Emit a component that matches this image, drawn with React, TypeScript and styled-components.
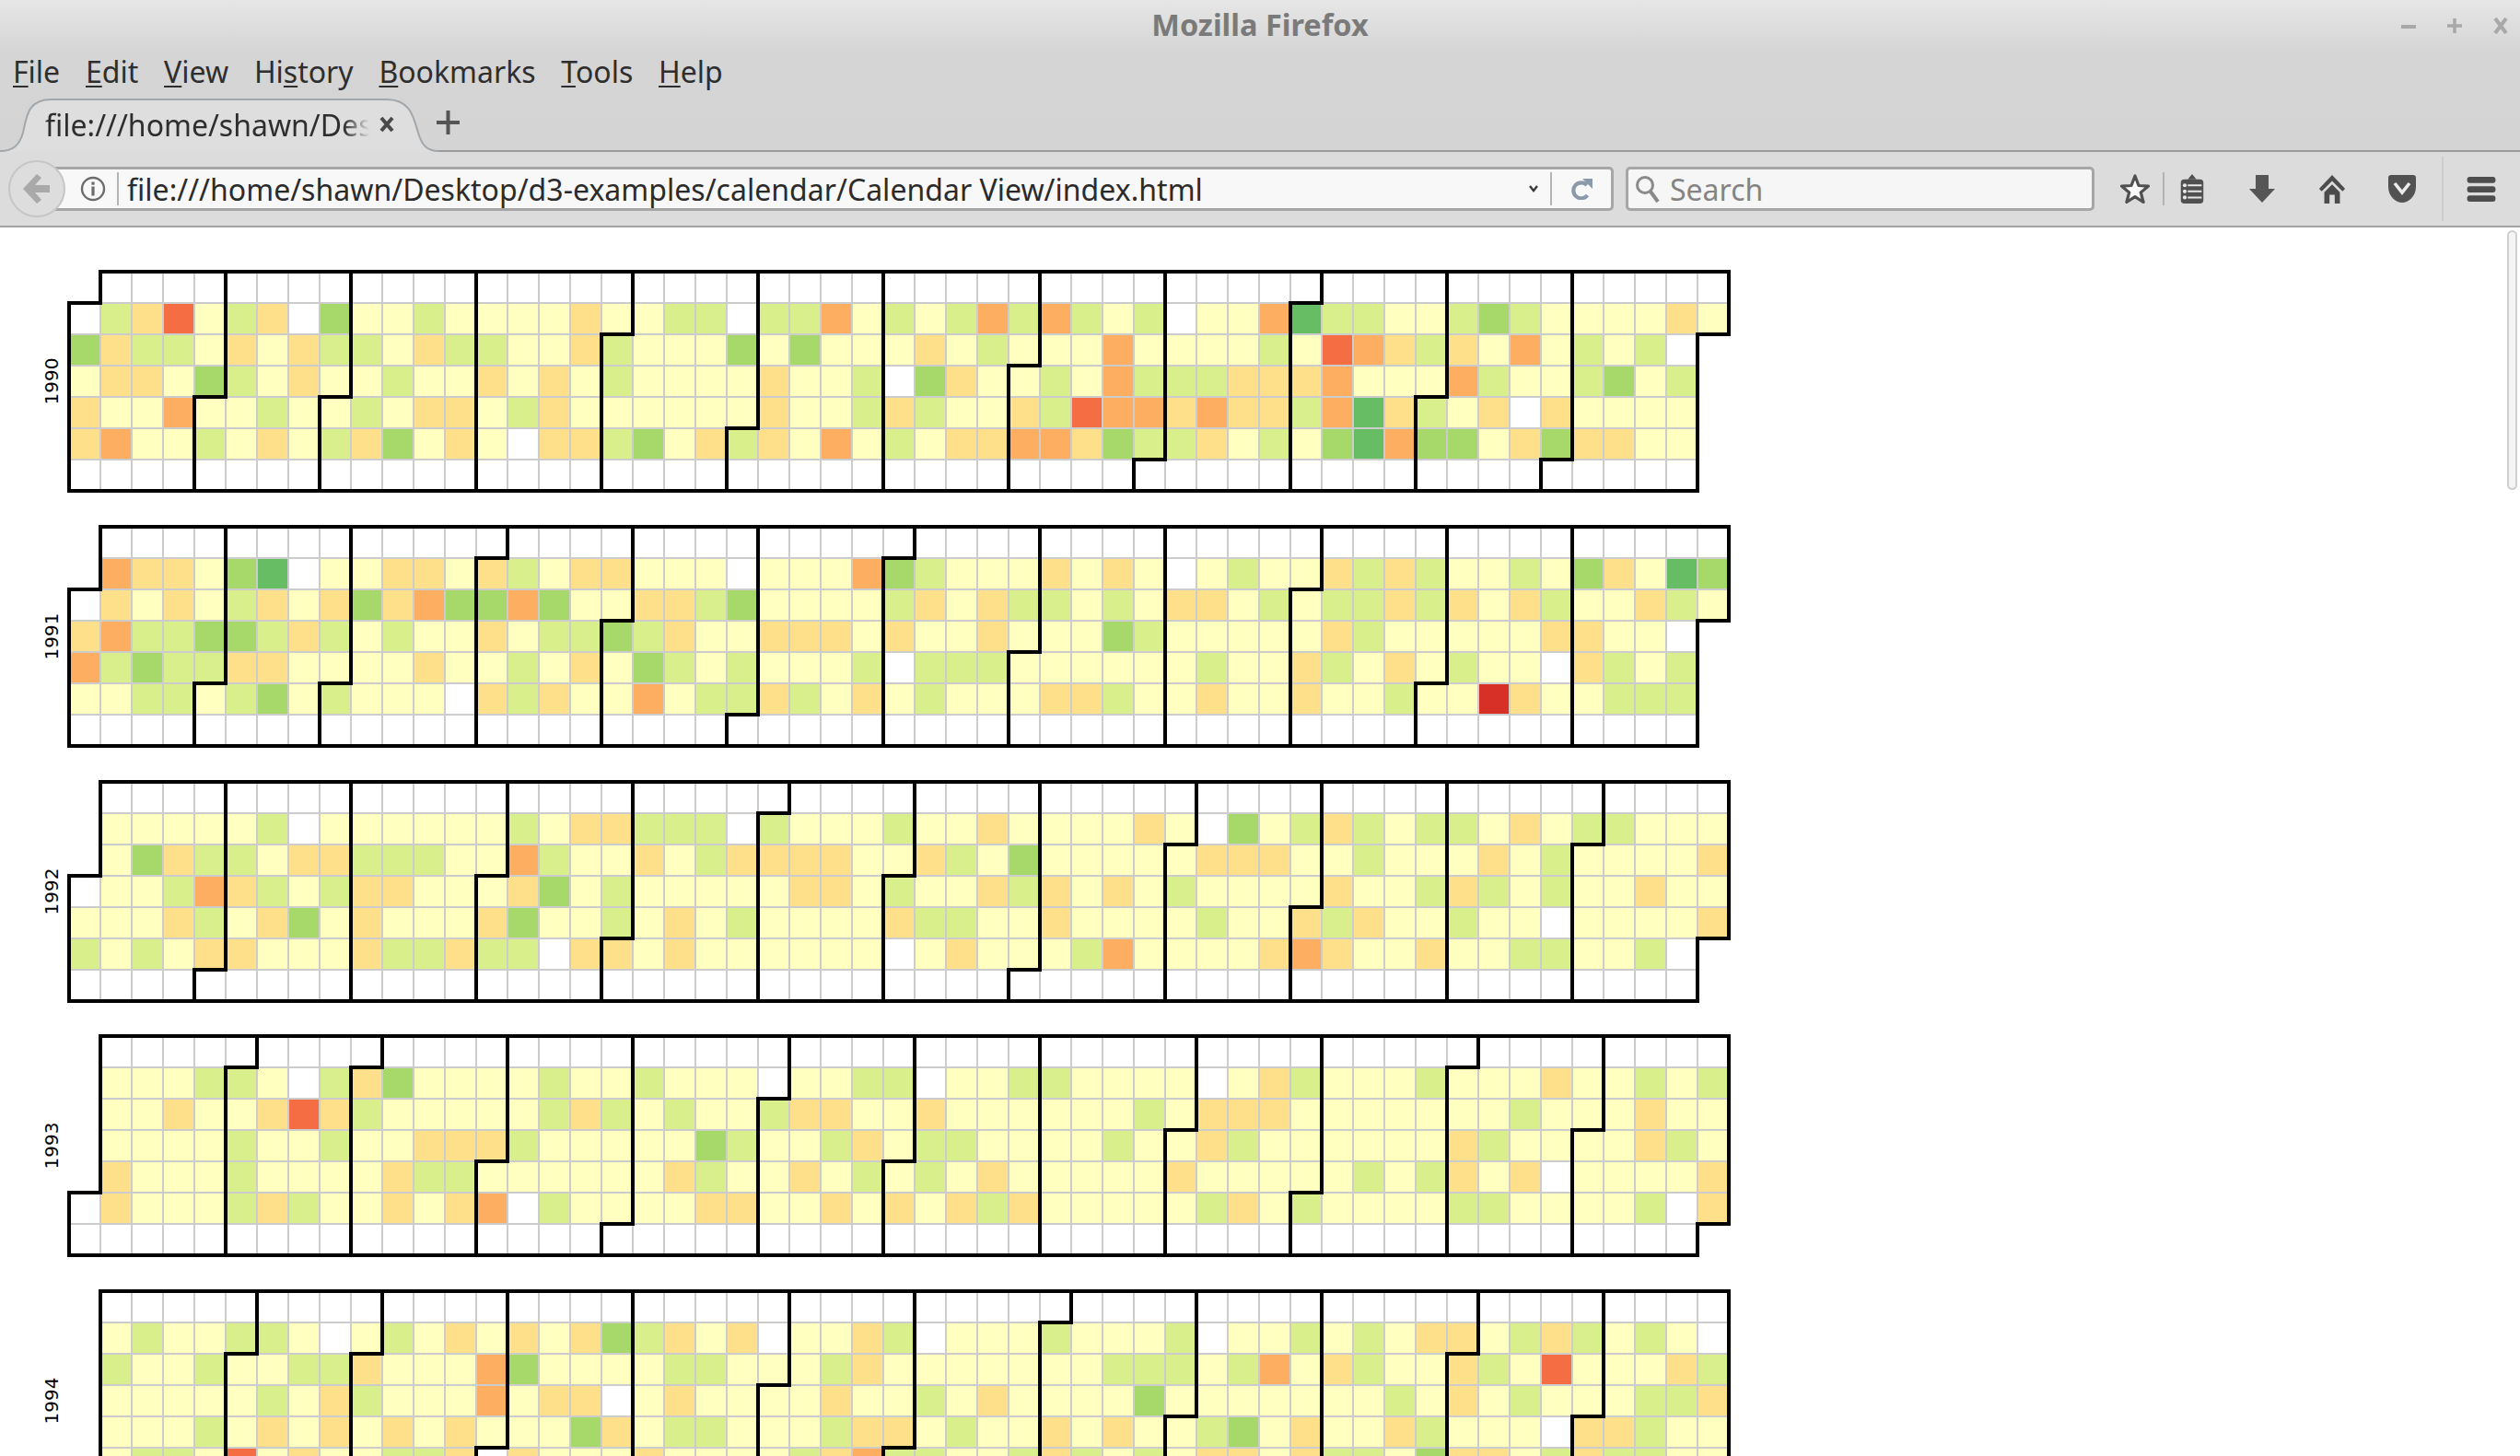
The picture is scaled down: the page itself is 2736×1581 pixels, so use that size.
import React from 'react'
import styled, { createGlobalStyle } from 'styled-components'

const GlobalStyle = createGlobalStyle`
  html, body {
    margin: 0;
    padding: 0;
    background: #fff;
  }
`

const uiFont = `'Noto Sans', 'Open Sans', sans-serif`

const Window = styled.div`
  width: 2736px;
  height: 1581px;
  display: flex;
  flex-direction: column;
  overflow: hidden;
  font-family: ${uiFont};
`

const TopChrome = styled.div`
  background: linear-gradient(to bottom, #e6e6e6 0, #d5d5d5 56px, #d4d4d4 100%);
`

const TitleBar = styled.div`
  height: 56px;
  display: grid;
  grid-template-columns: 1fr auto 1fr;
  align-items: center;
`

const Title = styled.div`
  grid-column: 2;
  font-size: 32.5px;
  font-weight: 700;
  color: #7a7a7a;
  margin-top: -3px;
`

const WindowButtons = styled.div`
  grid-column: 3;
  justify-self: end;
  display: flex;
  gap: 32px;
  padding-right: 12px;
  color: #a8a8a8;
`

const MenuBar = styled.div`
  height: 44px;
  display: flex;
  align-items: center;
  padding-left: 14px;
  gap: 27.8px;
`

const MenuItem = styled.span`
  font-size: 32px;
  line-height: 44px;
  color: #2e2e2e;

  u {
    text-underline-offset: 3px;
    text-decoration-thickness: 2px;
  }
`

const TabStrip = styled.div`
  height: 65px;
  display: flex;
  align-items: center;
  box-shadow: inset 0 -2px 0 #9c9c9c;
`

const Tab = styled.div`
  position: relative;
  width: 476px;
  height: 65px;
  display: flex;
  align-items: center;
  padding: 9px 0 0 49px;
  box-sizing: border-box;
  flex-shrink: 0;
`

const TabShape = styled.svg`
  position: absolute;
  left: 0;
  top: 0;
`

const TabLabel = styled.div`
  position: relative;
  width: 352px;
  overflow: hidden;
  white-space: nowrap;
  font-size: 32px;
  color: #2e2e2e;
  margin-top: -3px;
  -webkit-mask-image: linear-gradient(to right, #000 92%, transparent 100%);
  mask-image: linear-gradient(to right, #000 92%, transparent 100%);
`

const TabClose = styled.svg`
  position: relative;
  margin: -5px 0 0 11px;
`

const NewTab = styled.svg`
  margin: 1px 0 0 -2px;
`

const NavBar = styled.div`
  position: relative;
  height: 80px;
  display: flex;
  align-items: center;
  background: #dcdcdc;
  border-bottom: 2px solid #a3a3a3;
  padding-left: 60px;
`

const BackButton = styled.div`
  position: absolute;
  left: 9px;
  top: 9px;
  width: 62px;
  height: 62px;
  box-sizing: border-box;
  border-radius: 50%;
  border: 2px solid #c6c6c6;
  background: #dddddd;
  display: flex;
  align-items: center;
  justify-content: center;
`

const UrlBar = styled.div`
  width: 1692px;
  height: 48px;
  box-sizing: border-box;
  display: flex;
  align-items: center;
  background: #f8f8f8;
  border: 3px solid #a6a6a6;
  border-left: 0;
  border-radius: 0 5px 5px 0;
  padding-left: 27px;
`

const InfoIcon = styled.svg`
  flex-shrink: 0;
`

const UrlDivider = styled.div<{ $margin: string }>`
  width: 2px;
  height: 36px;
  background: #b4b4b4;
  flex-shrink: 0;
  margin: ${({ $margin }) => $margin};
`

const UrlText = styled.div`
  flex: 1;
  font-size: 32px;
  letter-spacing: 0.02px;
  color: #2b2b2b;
  white-space: nowrap;
  line-height: 42px;
  margin-top: 1px;
`

const ReloadIcon = styled.svg`
  margin-right: 19px;
  flex-shrink: 0;
`

const SearchBox = styled.div`
  width: 509px;
  height: 48px;
  margin-left: 13px;
  box-sizing: border-box;
  display: flex;
  align-items: center;
  gap: 10px;
  background: #f6f6f6;
  border: 3px solid #a6a6a6;
  border-radius: 5px;
  padding-left: 7px;
  font-size: 32px;
  color: #848484;
`

const ToolIcons = styled.div`
  display: flex;
  align-items: center;
  margin-left: 28px;
  color: #555;
`

const ToolIcon = styled.svg<{ $gap?: number }>`
  display: block;
  margin-left: ${({ $gap = 0 }) => $gap}px;
`

const ToolDivider = styled.div<{ $tall?: boolean }>`
  width: 2px;
  height: ${({ $tall }) => ($tall ? 70 : 36)}px;
  background: ${({ $tall }) => ($tall ? '#cdcdcd' : '#b4b4b4')};
  margin: ${({ $tall }) => ($tall ? '0 25px 0 27px' : '0 15px 0 14px')};
`

const Page = styled.main`
  position: relative;
  flex: 1;
  padding: 16px 16px 0;
  background: #fff;
  overflow: hidden;
  display: flex;
  flex-direction: column;
  gap: 4.8px;
`

const Scrollbar = styled.div`
  position: absolute;
  right: 3px;
  top: 3px;
  width: 11px;
  height: 282px;
  box-sizing: border-box;
  border: 2px solid #cfcfcf;
  border-radius: 6px;
  background: #f4f4f4;
`

const YearChart = styled.svg`
  display: block;
  flex-shrink: 0;
`

const YearLabel = styled.text`
  font-family: 'DejaVu Sans', sans-serif;
  font-size: 20px;
  fill: #000;
`

const CELL = 34

const palette: Record<string, string> = {
  R: '#d73027',
  r: '#f46d43',
  O: '#fdae61',
  o: '#fee08b',
  y: '#ffffbf',
  g: '#d9ef8b',
  G: '#a6d96a',
  D: '#66bd63',
}

// one string per weekday (Mon..Fri), one letter per week column
const years: Record<number, string[]> = {
  1990: [
    'WgorygoWGy' + 'ygyyyyoyyg' + 'gWggOygygO' + 'gOgygWyyOD' + 'ggyygGgyyy' + 'yoy',
    'Goggyoyogg' + 'yoggyyogyy' + 'yGyGyyyoyg' + 'yyyOyyyygy' + 'rOogoyOygy' + 'gW.',
    'yooyGgyoyy' + 'gyyoyoygyy' + 'yyoyygWGoy' + 'ygyOgggooo' + 'OyyyOgyygG' + 'yg.',
    'oyyOyygyyg' + 'yooygoyyyy' + 'yyoyygogyy' + 'ogrOOoOoog' + 'ODogyoWoyy' + 'yy.',
    'oOyygyoygo' + 'GyoyWoogGy' + 'ogoyOygyoo' + 'OOoGggoygy' + 'GDOGGyoGoo' + 'yy.',
  ],
  1991: [
    '.OooyGDWyy' + 'ooyogyooyy' + 'yWyyyOGgyy' + 'yoyoyWygyy' + 'ogogyygyGo' + 'yDG',
    'WoyoygoyoG' + 'oOGGOGyyoo' + 'gGyyyygoyo' + 'ggygyooygy' + 'ggogoyogyy' + 'ogy',
    'oOggGGgogy' + 'gyyoyggGgo' + 'yyoooyoyyo' + 'yyyGgyyyyy' + 'ogyyyyyooy' + 'yW.',
    'OgGggooyyy' + 'yoyygyoyGg' + 'ygyyygWggg' + 'yyyyyygyyo' + 'gyoygyyWog' + 'yg.',
    'yyggygGygy' + 'yyWogoyyOy' + 'ggogyoygyy' + 'yoogyyoyyo' + 'yygyyRoyyg' + 'gg.',
  ],
  1992: [
    '.yyyyygWyy' + 'yyyygyoogg' + 'gWgyyygyyo' + 'yyyyoyWGyg' + 'ogyggyoygg' + 'yyy',
    '.yGoggyoog' + 'ggyyOgyyoy' + 'gooooyyogy' + 'Gyyyyyoooy' + 'ygyyyoygyy' + 'yyo',
    'WyygOogygo' + 'oyyyoGygyy' + 'yyyooygyyo' + 'goyoygyyyy' + 'oyygogygyy' + 'oyy',
    'yyyogyoGyo' + 'yyyoGyygyo' + 'ygyyyyoggy' + 'yoyyyygyyo' + 'goyygyyWyy' + 'yyo',
    'gygyooyyyo' + 'ggoggWooyo' + 'yyyyyyWyoy' + 'yygOyyyyoO' + 'oyyoyyggyy' + 'gW.',
  ],
  1993: [
    '.yyyggyWgo' + 'Gyyyygyygy' + 'yyWyyggWyy' + 'ggyyyyWyog' + 'yyygyyyoyy' + 'gyg',
    '.yyoyyorog' + 'yyyyygogyg' + 'yygooyyoyy' + 'yyyygyoooy' + 'yyyyyygyyy' + 'oyy',
    '.yyyygyygy' + 'yooogyyyyy' + 'Ggyygoyggy' + 'yyygyyogyy' + 'yyyyogyyyy' + 'ogy',
    '.oyyygyyyy' + 'oggyyyyyyo' + 'gyyoygygyo' + 'yyyyyoyyyy' + 'ygygoyoWyy' + 'yyo',
    'Woyyygogyy' + 'oyoOWgyyyy' + 'ooyyoyoyog' + 'oyyyyygoyg' + 'yyyyggyyyy' + 'gWo',
  ],
  1994: [
    '.ygyyggyWy' + 'gyoyoyoGgo' + 'yoWyyogWyy' + 'ygyyygWyyg' + 'ygyooygogy' + 'gyW',
    '.gyygyyggo' + 'yyyOGyyyyg' + 'gyyygoyyyy' + 'yyygggygOy' + 'ogyyogyryy' + 'yog',
    '.yyyyygyog' + 'yyyOyooWyo' + 'yyyyoyygyo' + 'yyyyGyyyyy' + 'yygyoygyyy' + 'ggo',
    '.yyygyoyoy' + 'oyoyyyGoyg' + 'gyyygooygy' + 'yoyoyygGyo' + 'yyogyyyWoo' + 'gyy',
    '.yggyryoyy' + 'ggoWoyyyoy' + 'yyygoOggyy' + 'gogygyooyo' + 'ggyGooygog' + 'gyy',
  ],
}

const weekOf = (date: Date) => {
  const jan1 = new Date(Date.UTC(date.getUTCFullYear(), 0, 1))
  const dayOfYear = Math.round((date.getTime() - jan1.getTime()) / 86400000)
  return Math.floor((dayOfYear + jan1.getUTCDay()) / 7)
}

const monthPath = (year: number, month: number) => {
  const t0 = new Date(Date.UTC(year, month, 1))
  const t1 = new Date(Date.UTC(year, month + 1, 0))
  const d0 = t0.getUTCDay()
  const w0 = weekOf(t0)
  const d1 = t1.getUTCDay()
  const w1 = weekOf(t1)
  return (
    `M${(w0 + 1) * CELL},${d0 * CELL}H${w0 * CELL}V${7 * CELL}` +
    `H${w1 * CELL}V${(d1 + 1) * CELL}H${(w1 + 1) * CELL}V0H${(w0 + 1) * CELL}Z`
  )
}

const Year = ({ year }: { year: number }) => {
  const days: Date[] = []
  for (let d = new Date(Date.UTC(year, 0, 1)); d.getUTCFullYear() === year; d = new Date(d.getTime() + 86400000)) {
    days.push(d)
  }
  const rows = years[year]
  return (
    <YearChart width={1920} height={272}>
      <g transform="translate(59,32)">
        <YearLabel transform={`translate(-12,${CELL * 3.5}) rotate(-90)`} textAnchor="middle">
          {year}
        </YearLabel>
        <g stroke="#ccc" strokeWidth={2}>
          {days.map((d) => {
            const row = d.getUTCDay()
            const week = weekOf(d)
            const key = row >= 1 && row <= 5 ? rows[row - 1][week] : ''
            return (
              <rect
                key={d.getTime()}
                x={week * CELL}
                y={row * CELL}
                width={CELL}
                height={CELL}
                fill={palette[key] || '#fff'}
              />
            )
          })}
        </g>
        <g fill="none" stroke="#000" strokeWidth={4}>
          {Array.from({ length: 12 }, (_, m) => (
            <path key={m} d={monthPath(year, m)} />
          ))}
        </g>
      </g>
    </YearChart>
  )
}

const menu: [string, string, string][] = [
  ['', 'F', 'ile'],
  ['', 'E', 'dit'],
  ['', 'V', 'iew'],
  ['Hi', 's', 'tory'],
  ['', 'B', 'ookmarks'],
  ['', 'T', 'ools'],
  ['', 'H', 'elp'],
]

export default function App() {
  return (
    <Window>
      <GlobalStyle />
      <TopChrome>
        <TitleBar>
          <Title>Mozilla Firefox</Title>
          <WindowButtons>
            <svg width="18" height="18" viewBox="0 0 18 18">
              <rect x="1" y="8" width="16" height="4" fill="currentColor" />
            </svg>
            <svg width="18" height="18" viewBox="0 0 18 18">
              <path d="M1 9h16M9 1v16" stroke="currentColor" strokeWidth="3.5" />
            </svg>
            <svg width="18" height="18" viewBox="0 0 18 18">
              <path d="M3 1l12 16M15 1L3 17" stroke="currentColor" strokeWidth="4" />
            </svg>
          </WindowButtons>
        </TitleBar>
        <MenuBar>
          {menu.map(([before, key, after]) => (
            <MenuItem key={before + key}>
              {before}
              <u>{key}</u>
              {after}
            </MenuItem>
          ))}
        </MenuBar>
        <TabStrip>
          <Tab>
            <TabShape width="476" height="65" viewBox="0 0 476 65">
              <path
                d="M0 64C14 64 21 58 25 44C29 26 30 8 56 8H420C446 8 449 28 454 44C458 58 464 64 476 64V65H0Z"
                fill="#dedede"
              />
              <path
                d="M0 64C14 64 21 58 25 44C29 26 30 8 56 8H420C446 8 449 28 454 44C458 58 464 64 476 64"
                fill="none"
                stroke="#a2a7ab"
                strokeWidth="2"
              />
            </TabShape>
            <TabLabel>file:///home/shawn/Desktop/d3-examples</TabLabel>
            <TabClose width="16" height="18" viewBox="0 0 16 18">
              <path d="M2 2l12 14M14 2L2 16" stroke="#4a4a4a" strokeWidth="4" />
            </TabClose>
          </Tab>
          <NewTab width="26" height="26" viewBox="0 0 26 26">
            <path d="M0 13h25M12.5 0v26" stroke="#555" strokeWidth="4" />
          </NewTab>
        </TabStrip>
      </TopChrome>
      <NavBar>
        <BackButton>
          <svg width="32" height="34" viewBox="0 0 32 34">
            <path d="M16 1L1 17l15 16 5-4-7-8h16v-8H14l7-8z" fill="#a9a9a9" />
          </svg>
        </BackButton>
        <UrlBar>
          <InfoIcon width="28" height="28" viewBox="0 0 28 28" fill="none">
            <circle cx="14" cy="14" r="12" stroke="#6c6c6c" strokeWidth="2.4" />
            <rect x="12.4" y="11.5" width="3.2" height="10" fill="#6c6c6c" />
            <rect x="12.4" y="6.5" width="3.2" height="3.2" fill="#6c6c6c" />
          </InfoIcon>
          <UrlDivider $margin="0 9px 0 12px" />
          <UrlText>file:///home/shawn/Desktop/d3-examples/calendar/Calendar View/index.html</UrlText>
          <svg width="12" height="10" viewBox="0 0 12 10" fill="none">
            <path d="M2 2l4 5 4-5" stroke="#3a3a3a" strokeWidth="2.4" />
          </svg>
          <UrlDivider $margin="0 21px 0 12px" />
          <ReloadIcon width="24" height="24" viewBox="0 0 24 24" fill="none">
            <path d="M17 8A8.5 8.5 0 1 0 17.5 19" stroke="#8b9aaa" strokeWidth="4.2" />
            <path d="M12 1h11v11z" fill="#8b9aaa" />
          </ReloadIcon>
        </UrlBar>
        <SearchBox>
          <svg width="28" height="32" viewBox="0 0 28 32" fill="none">
            <circle cx="11" cy="12" r="8.5" stroke="#8a8a8a" strokeWidth="3" />
            <path d="M17 19l8 11" stroke="#8a8a8a" strokeWidth="4" />
          </svg>
          Search
        </SearchBox>
        <ToolIcons>
          <ToolIcon width="32" height="32" viewBox="0 0 32 32">
            <path
              d="M16 2l4 10.5 10.5.6-8.2 6.9 2.8 10.5L16 24.6 6.9 30.5l2.8-10.5-8.2-6.9 10.5-.6z"
              fill="#fafafa"
              stroke="#505050"
              strokeWidth="3.2"
              strokeLinejoin="round"
            />
          </ToolIcon>
          <ToolDivider />
          <ToolIcon width="30" height="32" viewBox="0 0 30 34">
            <path d="M15 0l5 6h-10z" fill="#505050" />
            <rect x="2" y="6" width="26" height="28" rx="4" fill="#505050" />
            <path d="M10 13h16M10 20h16M10 27h16" stroke="#e8e8e8" strokeWidth="2.2" />
            <circle cx="6.5" cy="13" r="2.2" fill="#e8e8e8" />
            <circle cx="6.5" cy="20" r="2.2" fill="#e8e8e8" />
            <circle cx="6.5" cy="27" r="2.2" fill="#e8e8e8" />
          </ToolIcon>
          <ToolIcon $gap={46} width="30" height="30" viewBox="0 0 30 30">
            <path d="M8 0h14v15h7L15 30 1 15h7z" fill="#565656" />
          </ToolIcon>
          <ToolIcon $gap={45} width="32" height="32" viewBox="0 0 32 34">
            <path d="M16 1L1 17l3 3L16 8l12 12 3-3z" fill="#4c4c4c" />
            <path d="M16 12L7 21v13h6V24h6v10h6V21z" fill="#4c4c4c" />
          </ToolIcon>
          <ToolIcon $gap={44} width="32" height="30" viewBox="0 0 32 30">
            <path d="M1 3a3 3 0 0 1 3-3h24a3 3 0 0 1 3 3v10c0 10-8 17-15 17S1 23 1 13z" fill="#525252" />
            <path d="M8 9l8 10 8-10" fill="none" stroke="#ececec" strokeWidth="3.6" />
          </ToolIcon>
          <ToolDivider $tall />
          <ToolIcon width="32" height="27" viewBox="0 0 32 28">
            <rect x="0" y="0" width="32" height="7" rx="3" fill="#4d4d4d" />
            <rect x="0" y="10.5" width="32" height="7" rx="3" fill="#4d4d4d" />
            <rect x="0" y="21" width="32" height="7" rx="3" fill="#4d4d4d" />
          </ToolIcon>
        </ToolIcons>
      </NavBar>
      <Page>
        <Scrollbar />
        {[1990, 1991, 1992, 1993, 1994].map((y) => (
          <Year key={y} year={y} />
        ))}
      </Page>
    </Window>
  )
}
